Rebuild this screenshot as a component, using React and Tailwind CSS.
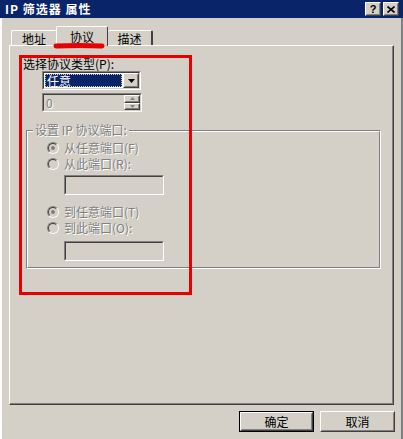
const font = "font-['SimSun','Noto_Sans_CJK_SC',sans-serif]";

const Raised = ({ className = "", children }) => (
  <div className={`border border-t-white border-l-white border-r-[#404040] border-b-[#404040] ${className}`}>
    <div className="h-full w-full border border-t-[#D4D0C8] border-l-[#D4D0C8] border-r-[#808080] border-b-[#808080] flex items-center justify-center">
      {children}
    </div>
  </div>
);

const Sunken = ({ className = "", children }) => (
  <div className={`border border-t-[#808080] border-l-[#808080] border-r-white border-b-white ${className}`}>
    <div className="h-full w-full border border-t-[#404040] border-l-[#404040] border-r-[#D4D0C8] border-b-[#D4D0C8] flex items-center">
      {children}
    </div>
  </div>
);

const dim = "text-[#808080] [text-shadow:1px_1px_0_#fff]";

const Radio = ({ checked, label }) => (
  <div className="flex items-center h-[16px]">
    <span className="w-[12px] h-[12px] rounded-full border border-t-[#808080] border-l-[#808080] border-r-white border-b-white flex items-center justify-center">
      <span className="w-[10px] h-[10px] rounded-full border border-t-[#404040] border-l-[#404040] border-r-[#D4D0C8] border-b-[#D4D0C8] flex items-center justify-center">
        {checked && <span className="w-[4px] h-[4px] rounded-full bg-[#808080]" />}
      </span>
    </span>
    <span className={`ml-[5px] text-[12px] ${dim}`}>{label}</span>
  </div>
);

export default function App() {
  return (
    <div className={`w-[403px] h-[439px] bg-[#D4D0C8] relative overflow-hidden ${font} text-[12px] leading-none text-black`}>
      {/* title bar */}
      <div className="h-[18px] bg-[#0A246A] flex items-center pl-[5px] pr-[4px]">
        <span className="text-white font-bold text-[12px] tracking-[1px]">IP 筛选器 属性</span>
        <div className="ml-auto flex gap-[2px]">
          <Raised className="w-[16px] h-[14px] bg-[#D4D0C8]">
            <span className="font-bold text-[11px] font-['Liberation_Sans',sans-serif]">?</span>
          </Raised>
          <Raised className="w-[16px] h-[14px] bg-[#D4D0C8]">
            <svg width="8" height="7" viewBox="0 0 8 7">
              <path d="M0.5 0.5 L7.5 6.5 M7.5 0.5 L0.5 6.5" stroke="#000" strokeWidth="1.6" />
            </svg>
          </Raised>
        </div>
      </div>

      <div className="h-[421px] border-l-2 border-l-white border-r-2 border-r-[#808080]">
        {/* tabs */}
        <div className="flex items-end h-[27px] pl-[9px] relative z-10">
          <div className="h-[15px] w-[46px] border-t border-l border-white border-r border-r-[#404040] rounded-t-[2px] flex items-center justify-center mt-auto">
            <span className="pt-[2px]">地址</span>
          </div>
          <div className="h-[20px] w-[52px] -mb-[1px] bg-[#D4D0C8] border-t border-l border-white border-r border-r-[#404040] rounded-t-[2px] flex items-start justify-center pt-[4px] -ml-[1px]">
            <span>协议</span>
          </div>
          <div className="h-[15px] w-[45px] border-t border-white border-r-2 border-r-[#404040] rounded-t-[2px] flex items-center justify-center">
            <span className="pt-[2px]">描述</span>
          </div>
        </div>

        {/* panel */}
        <div className="ml-[7px] w-[385px] h-[360px] border-t border-l border-white border-r border-b border-r-[#404040] border-b-[#404040]">
          <div className="h-full border-r border-b border-r-[#808080] border-b-[#808080] pt-[12px] pl-[13px]">
            <div className="h-[12px]">选择协议类型(P):</div>

            <Sunken className="mt-[1px] ml-[19px] w-[99px] h-[19px] bg-white">
              <div className="flex-1 h-full bg-white p-[1px]">
                <div className="h-full bg-[#0A246A] text-white flex items-center pl-[2px] outline-1 outline-dotted outline-[#D4D0C8] -outline-offset-1">
                  任意
                </div>
              </div>
              <Raised className="w-[16px] h-full bg-[#D4D0C8]">
                <svg width="7" height="4" viewBox="0 0 7 4">
                  <path d="M0 0 H7 L3.5 4 Z" fill="#000" />
                </svg>
              </Raised>
            </Sunken>

            <Sunken className="mt-[3px] ml-[19px] w-[100px] h-[19px] bg-[#D4D0C8]">
              <span className={`flex-1 pl-[2px] ${dim}`}>0</span>
              <div className="w-[16px] h-full flex flex-col">
                <Raised className="h-1/2 w-full">
                  <svg width="5" height="3" viewBox="0 0 5 3"><path d="M0 3 H5 L2.5 0 Z" fill="#808080" /></svg>
                </Raised>
                <Raised className="h-1/2 w-full">
                  <svg width="5" height="3" viewBox="0 0 5 3"><path d="M0 0 H5 L2.5 3 Z" fill="#808080" /></svg>
                </Raised>
              </div>
            </Sunken>

            {/* group box */}
            <div className="relative mt-[18px] ml-[3px] w-[355px] h-[139px] border border-t-[#808080] border-l-[#808080] border-r-white border-b-white">
              <div className="h-full border border-t-white border-l-white border-r-[#808080] border-b-[#808080] pt-[8px] pl-[19px]">
                <span className={`absolute -top-[7px] left-[6px] bg-[#D4D0C8] px-[2px] ${dim}`}>设置 IP 协议端口:</span>
                <Radio checked label="从任意端口(F)" />
                <Radio label="从此端口(R):" />
                <Sunken className="mt-[3px] ml-[17px] w-[100px] h-[20px]" />
                <div className="h-[9px]" />
                <Radio checked label="到任意端口(T)" />
                <Radio label="到此端口(O):" />
                <Sunken className="mt-[5px] ml-[17px] w-[100px] h-[20px]" />
              </div>
            </div>
          </div>
        </div>

        {/* buttons */}
        <div className="flex justify-end gap-[6px] mt-[6px] pr-[6px]">
          <div className="border border-black w-[75px] h-[21px]">
            <Raised className="w-full h-full">确定</Raised>
          </div>
          <Raised className="w-[75px] h-[21px]">取消</Raised>
        </div>
      </div>

      {/* red annotations */}
      <div className="absolute z-20 left-[19px] top-[55px] w-[173px] h-[240px] border-[3px] border-[#E60000] pointer-events-none" />
      <svg className="absolute z-20 left-[52px] top-[41px] pointer-events-none" width="54" height="10" viewBox="0 0 54 10">
        <path d="M4 5 Q27 4 50 5" stroke="#E60000" strokeWidth="5" strokeLinecap="round" fill="none" />
      </svg>
    </div>
  );
}
